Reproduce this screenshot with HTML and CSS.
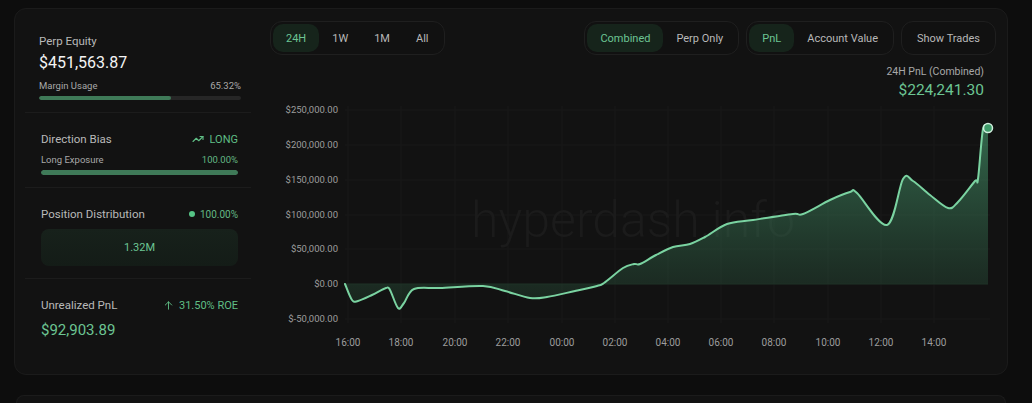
FILE: index.html
```html
<!DOCTYPE html>
<html lang="en">
<head>
  <meta charset="UTF-8">
  <meta name="viewport" content="width=device-width, initial-scale=1.0">
  <title>Perp Overview</title>
  <link rel="stylesheet" href="styles.css">
</head>
<body>
  <div class="card overview">
    <aside class="stats">
      <section class="stat equity">
        <div class="stat-label">Perp Equity</div>
        <div class="equity-value">$451,563.87</div>
        <div class="sub-row"><span>Margin Usage</span><span>65.32%</span></div>
        <div class="bar"><div class="bar-fill" style="width: 65.32%"></div></div>
      </section>

      <section class="stat">
        <div class="head-row">
          <span class="stat-label">Direction Bias</span>
          <span class="long">
            <svg width="12" height="12" viewBox="0 0 24 24" fill="none" stroke="currentColor" stroke-width="2.2" stroke-linecap="round" stroke-linejoin="round"><polyline points="22 7 13.5 15.5 8.5 10.5 2 17"/><polyline points="16 7 22 7 22 13"/></svg>
            LONG
          </span>
        </div>
        <div class="sub-row"><span>Long Exposure</span><span class="green">100.00%</span></div>
        <div class="bar bar-thick"><div class="bar-fill" style="width: 100%"></div></div>
      </section>

      <section class="stat">
        <div class="head-row">
          <span class="stat-label">Position Distribution</span>
          <span class="dist-pct"><span class="dot"></span>100.00%</span>
        </div>
        <div class="dist-box">1.32M</div>
      </section>

      <section class="stat last">
        <div class="head-row">
          <span class="stat-label">Unrealized PnL</span>
          <span class="roe">
            <svg width="11" height="11" viewBox="0 0 24 24" fill="none" stroke="currentColor" stroke-width="2" stroke-linecap="round" stroke-linejoin="round"><path d="M12 20V4"/><path d="M5 11l7-7 7 7"/></svg>
            31.50% ROE
          </span>
        </div>
        <div class="upnl">$92,903.89</div>
      </section>
    </aside>

    <div class="chart-panel">
      <div class="toolbar">
        <div class="seg">
          <button class="active">24H</button>
          <button>1W</button>
          <button>1M</button>
          <button>All</button>
        </div>
        <div class="toolbar-right">
          <div class="seg">
            <button class="active">Combined</button>
            <button>Perp Only</button>
          </div>
          <div class="seg">
            <button class="active">PnL</button>
            <button>Account Value</button>
          </div>
          <div class="seg">
            <button>Show Trades</button>
          </div>
        </div>
      </div>

      <div class="summary">
        <div class="summary-label">24H PnL (Combined)</div>
        <div class="summary-value">$224,241.30</div>
      </div>

      <svg class="chart" viewBox="270 100 726 255" width="726" height="255">
        <defs>
          <linearGradient id="areaFill" gradientUnits="userSpaceOnUse" x1="0" y1="127" x2="0" y2="300">
            <stop offset="0" stop-color="#4fae7c" stop-opacity="0.55"/>
            <stop offset="0.9" stop-color="#2d5a41" stop-opacity="0.35"/>
            <stop offset="1" stop-color="#24432f" stop-opacity="0.4"/>
          </linearGradient>
        </defs>
        <g class="grid">
          <line x1="345" y1="109" x2="990" y2="109"/>
          <line x1="345" y1="144" x2="990" y2="144"/>
          <line x1="345" y1="179" x2="990" y2="179"/>
          <line x1="345" y1="214" x2="990" y2="214"/>
          <line x1="345" y1="248" x2="990" y2="248"/>
          <line x1="345" y1="318" x2="990" y2="318"/>
          <line x1="348" y1="105" x2="348" y2="322"/>
          <line x1="401" y1="105" x2="401" y2="322"/>
          <line x1="455" y1="105" x2="455" y2="322"/>
          <line x1="508" y1="105" x2="508" y2="322"/>
          <line x1="562" y1="105" x2="562" y2="322"/>
          <line x1="615" y1="105" x2="615" y2="322"/>
          <line x1="668" y1="105" x2="668" y2="322"/>
          <line x1="721" y1="105" x2="721" y2="322"/>
          <line x1="774" y1="105" x2="774" y2="322"/>
          <line x1="828" y1="105" x2="828" y2="322"/>
          <line x1="881" y1="105" x2="881" y2="322"/>
          <line x1="934" y1="105" x2="934" y2="322"/>
        </g>
        <text class="watermark" x="633" y="236" text-anchor="middle">hyperdash.info</text>
        <g class="y-labels" text-anchor="end">
          <text x="338" y="112">$250,000.00</text>
          <text x="338" y="147">$200,000.00</text>
          <text x="338" y="182">$150,000.00</text>
          <text x="338" y="217">$100,000.00</text>
          <text x="338" y="251">$50,000.00</text>
          <text x="338" y="286">$0.00</text>
          <text x="338" y="321">$-50,000.00</text>
        </g>
        <g class="x-labels" text-anchor="middle">
          <text x="348" y="345">16:00</text>
          <text x="401" y="345">18:00</text>
          <text x="455" y="345">20:00</text>
          <text x="508" y="345">22:00</text>
          <text x="562" y="345">00:00</text>
          <text x="615" y="345">02:00</text>
          <text x="668" y="345">04:00</text>
          <text x="721" y="345">06:00</text>
          <text x="774" y="345">08:00</text>
          <text x="828" y="345">10:00</text>
          <text x="881" y="345">12:00</text>
          <text x="934" y="345">14:00</text>
        </g>
        <path id="pnlArea" class="area" fill="url(#areaFill)"/>
        <line class="zero" x1="345" y1="283" x2="988" y2="283"/>
        <path id="pnlLine" class="line"/>
        <circle class="end-dot" cx="988" cy="127" r="4.5"/>
      </svg>
    </div>
  </div>

  <div class="card next"></div>

  <script src="chart.js"></script>
</body>
</html>
```

FILE: styles.css
```css
body {
  margin: 0;
  padding: 8px 24px 0 14px;
  background: #0d0d0d;
  font-family: Roboto, "Noto Sans", sans-serif;
  color: #e8e8e8;
  overflow: hidden;
}

.card {
  background: #121212;
  border: 1px solid #1b1b1b;
  border-radius: 12px;
  box-sizing: border-box;
}

.overview {
  display: flex;
  width: 994px;
  height: 367px;
}

.next {
  width: 990px;
  height: 8px;
  margin: 20px 2px 0;
  border-bottom: none;
  border-radius: 12px 12px 0 0;
}

/* left column */
.stats {
  width: 244px;
  flex-shrink: 0;
  display: flex;
  flex-direction: column;
}

.stat {
  margin: 0 8px 0 10px;
  padding: 18px 13px 12px 16px;
  border-bottom: 1px solid #1c1c1c;
}

.stat.equity {
  padding: 24px 10px 12px 14px;
}

.stat.last {
  border-bottom: none;
}

.stat-label {
  font-size: 11.5px;
  line-height: 16px;
  color: #b9b9b9;
}

.equity-value {
  margin-top: 4px;
  font-size: 16px;
  line-height: 20px;
  color: #f4f4f4;
}

.sub-row {
  display: flex;
  justify-content: space-between;
  margin-top: 6px;
  font-size: 9.5px;
  line-height: 14px;
  color: #a8a8a8;
}

.head-row {
  display: flex;
  justify-content: space-between;
  align-items: center;
  height: 16px;
}

.green {
  color: #62b884;
}

.bar {
  margin-top: 3px;
  height: 4px;
  background: #262626;
  border-radius: 2px;
  overflow: hidden;
}

.bar-thick {
  height: 5px;
  border-radius: 3px;
}

.bar-fill {
  height: 100%;
  background: #3f7a58;
  border-radius: inherit;
}

.long {
  display: flex;
  align-items: center;
  gap: 6px;
  font-size: 11px;
  color: #5fbe85;
}

.dist-pct {
  display: flex;
  align-items: center;
  gap: 5px;
  font-size: 10px;
  color: #62b884;
}

.dot {
  width: 6px;
  height: 6px;
  border-radius: 50%;
  background: #56c486;
}

.dist-box {
  margin-top: 7px;
  height: 37px;
  display: flex;
  align-items: center;
  justify-content: center;
  background: linear-gradient(180deg, #17211b, #141c17);
  border-radius: 8px;
  font-size: 11px;
  color: #6cc593;
}

.roe {
  display: flex;
  align-items: center;
  gap: 5px;
  font-size: 11px;
  color: #5fbe85;
}

.upnl {
  margin-top: 7px;
  font-size: 15px;
  line-height: 20px;
  color: #6cc593;
}

/* chart side */
.chart-panel {
  flex: 1;
  padding: 12px 11px 0 11px;
  display: flex;
  flex-direction: column;
}

.toolbar {
  display: flex;
  justify-content: space-between;
}

.toolbar-right {
  display: flex;
  gap: 7px;
}

.seg {
  display: flex;
  padding: 2px;
  background: #111;
  border: 1px solid #1f1f1f;
  border-radius: 12px;
}

.seg button {
  height: 28px;
  padding: 0 13px;
  border: none;
  border-radius: 10px;
  background: none;
  font-family: inherit;
  font-size: 11px;
  color: #b8b8b8;
}

.seg button.active {
  background: #16241b;
  color: #6cc593;
}

.summary {
  margin: 10px 12px 0 0;
  text-align: right;
}

.summary-label {
  font-size: 10.5px;
  line-height: 14px;
  color: #a8a8a8;
}

.summary-value {
  margin-top: 1px;
  font-size: 15.5px;
  line-height: 20px;
  color: #6cc593;
}

.chart {
  display: block;
  margin-top: 1px;
  overflow: visible;
}

.grid line {
  stroke: #181818;
  stroke-width: 1;
}

.watermark {
  font-size: 50px;
  font-weight: 300;
  fill: #1b1b1b;
}

.y-labels text {
  font-size: 9.5px;
  fill: #9d9d9d;
}

.x-labels text {
  font-size: 10px;
  fill: #9d9d9d;
}

.zero {
  stroke: #1f3326;
  stroke-width: 1;
}

.line {
  fill: none;
  stroke: #7ad3a1;
  stroke-width: 2;
  stroke-linejoin: round;
  stroke-linecap: round;
}

.end-dot {
  fill: #3f9c6a;
  stroke: #cfeedd;
  stroke-width: 1.5;
}
```

FILE: chart.js
```js
// pnl samples in page coords of the chart viewBox
const points = [
  [345, 283], [352, 299], [358, 300], [372, 294], [386, 287], [390, 289],
  [398, 307], [404, 302], [414, 288], [440, 287], [483, 285], [505, 290],
  [530, 297], [547, 296], [575, 290], [597, 285], [604, 282], [623, 267],
  [634, 263], [640, 263], [656, 254], [673, 246], [690, 243], [705, 236],
  [727, 223], [753, 219], [793, 213], [803, 213], [830, 199], [850, 191],
  [857, 192], [887, 224], [903, 178], [913, 180], [930, 194], [948, 207],
  [958, 201], [975, 180], [978, 178], [983, 128], [988, 127]
];

function smoothPath(pts) {
  let d = `M${pts[0][0]},${pts[0][1]}`;
  for (let i = 0; i < pts.length - 1; i++) {
    const p0 = pts[i - 1] || pts[i];
    const p1 = pts[i];
    const p2 = pts[i + 1];
    const p3 = pts[i + 2] || p2;
    const c1x = p1[0] + (p2[0] - p0[0]) / 6;
    const c1y = p1[1] + (p2[1] - p0[1]) / 6;
    const c2x = p2[0] - (p3[0] - p1[0]) / 6;
    const c2y = p2[1] - (p3[1] - p1[1]) / 6;
    d += ` C${c1x.toFixed(1)},${c1y.toFixed(1)} ${c2x.toFixed(1)},${c2y.toFixed(1)} ${p2[0]},${p2[1]}`;
  }
  return d;
}

const line = smoothPath(points);
const last = points[points.length - 1];
document.getElementById('pnlLine').setAttribute('d', line);
document.getElementById('pnlArea').setAttribute('d', `${line} L${last[0]},283 L${points[0][0]},283 Z`);
```
